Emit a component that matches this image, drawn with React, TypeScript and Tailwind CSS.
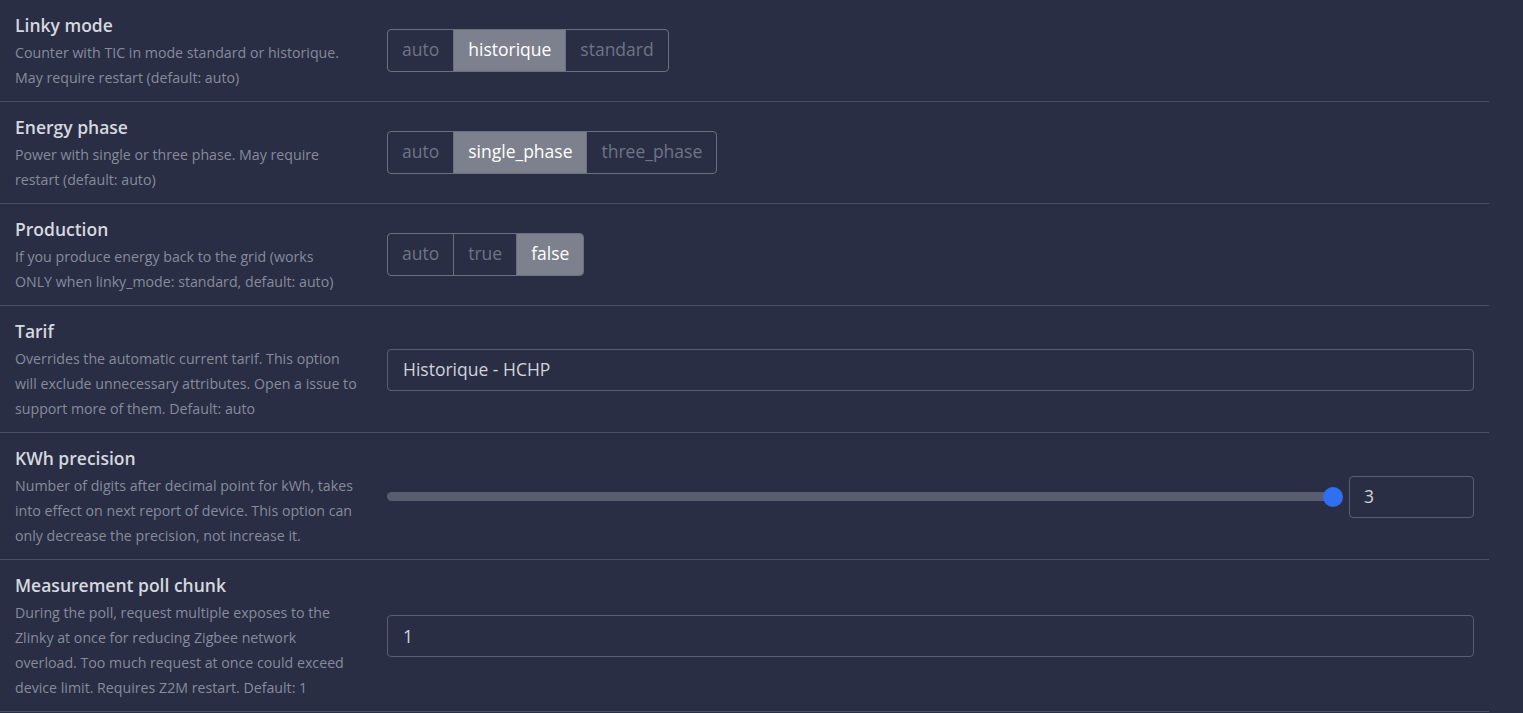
import { useState } from 'react';

type Row = {
  title: string;
  desc: string[];
  kind: 'toggle' | 'text' | 'slider';
  options?: string[];
  value: string;
};

const rows: Row[] = [
  {
    title: 'Linky mode',
    desc: ['Counter with TIC in mode standard or historique.', 'May require restart (default: auto)'],
    kind: 'toggle',
    options: ['auto', 'historique', 'standard'],
    value: 'historique',
  },
  {
    title: 'Energy phase',
    desc: ['Power with single or three phase. May require', 'restart (default: auto)'],
    kind: 'toggle',
    options: ['auto', 'single_phase', 'three_phase'],
    value: 'single_phase',
  },
  {
    title: 'Production',
    desc: ['If you produce energy back to the grid (works', 'ONLY when linky_mode: standard, default: auto)'],
    kind: 'toggle',
    options: ['auto', 'true', 'false'],
    value: 'false',
  },
  {
    title: 'Tarif',
    desc: [
      'Overrides the automatic current tarif. This option',
      'will exclude unnecessary attributes. Open a issue to',
      'support more of them. Default: auto',
    ],
    kind: 'text',
    value: 'Historique - HCHP',
  },
  {
    title: 'KWh precision',
    desc: [
      'Number of digits after decimal point for kWh, takes',
      'into effect on next report of device. This option can',
      'only decrease the precision, not increase it.',
    ],
    kind: 'slider',
    value: '3',
  },
  {
    title: 'Measurement poll chunk',
    desc: [
      'During the poll, request multiple exposes to the',
      'Zlinky at once for reducing Zigbee network',
      'overload. Too much request at once could exceed',
      'device limit. Requires Z2M restart. Default: 1',
    ],
    kind: 'text',
    value: '1',
  },
];

const Toggle = ({ options, initial }: { options: string[]; initial: string }) => {
  const [value, setValue] = useState(initial);
  return (
    <div className="inline-flex h-[43px] -mt-[2px] rounded border border-[#6b6f7f] overflow-hidden">
      {options.map((o, i) => (
        <button
          key={o}
          onClick={() => setValue(o)}
          className={
            'px-[14px] text-[17.5px] leading-none ' +
            (i > 0 ? 'border-l border-[#6b6f7f] ' : '') +
            (o === value ? 'bg-[#7d818d] text-white' : 'text-[#6f7486]')
          }
        >
          {o}
        </button>
      ))}
    </div>
  );
};

const Slider = ({ value }: { value: string }) => (
  <div className="flex items-center gap-4">
    <div className="relative flex-1 h-[9px] rounded-full bg-[#5a5d70]">
      <div className="absolute right-[-10px] top-1/2 -translate-y-1/2 w-5 h-5 rounded-full bg-[#2f6ff1]" />
    </div>
    <div className="w-[125px] h-[42px] rounded border border-[#5b5f70] flex items-center px-[14px] text-[17.5px] text-[#d0d3db]">
      {value}
    </div>
  </div>
);

export default function App() {
  return (
    <div
      className="min-h-screen bg-[#292e44] text-[#d2d5dc]"
      style={{ fontFamily: '"Open Sans", "Noto Sans", sans-serif' }}
    >
      <div className="w-[1489px]">
        {rows.map((r) => (
          <div key={r.title} className="flex items-center border-b border-[#4b4f62] pt-3 pb-[11px]">
            <div className="w-[387px] shrink-0 pl-[15px] pr-4">
              <div className="text-[17.5px] font-semibold leading-[26px] mb-[2px] text-[#d5d8df]">{r.title}</div>
              <div className="text-[14.2px] leading-[25px] text-[#878b9c]">
                {r.desc.map((d) => (
                  <div key={d} className="whitespace-nowrap">{d}</div>
                ))}
              </div>
            </div>
            <div className="flex-1 pr-[15px]">
              {r.kind === 'toggle' && <Toggle options={r.options!} initial={r.value} />}
              {r.kind === 'text' && (
                <div className="h-[42px] rounded border border-[#5b5f70] flex items-center px-[15px] text-[17.5px] text-[#d0d3db]">
                  {r.value}
                </div>
              )}
              {r.kind === 'slider' && <Slider value={r.value} />}
            </div>
          </div>
        ))}
      </div>
    </div>
  );
}
